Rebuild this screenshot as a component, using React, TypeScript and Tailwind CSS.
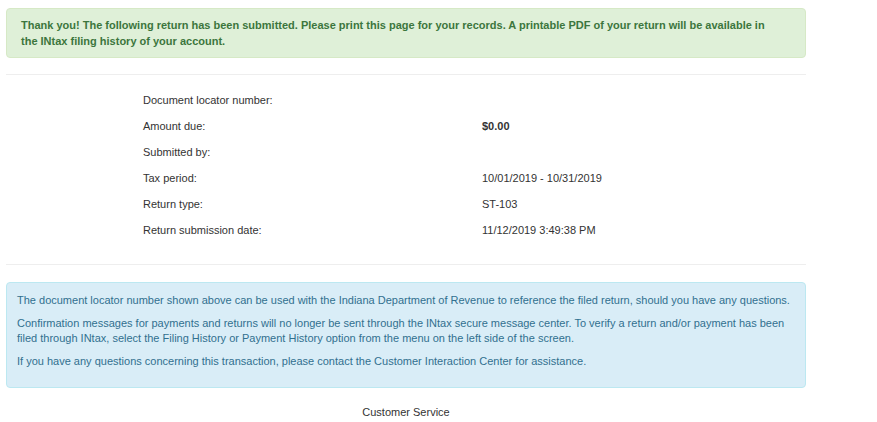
const rows: { label: string; value: string; bold?: boolean }[] = [
  { label: "Document locator number:", value: "" },
  { label: "Amount due:", value: "$0.00", bold: true },
  { label: "Submitted by:", value: "" },
  { label: "Tax period:", value: "10/01/2019 - 10/31/2019" },
  { label: "Return type:", value: "ST-103" },
  { label: "Return submission date:", value: "11/12/2019 3:49:38 PM" },
];

export default function App() {
  return (
    <main className="min-h-screen bg-white pl-[6px] pt-[8px] font-['Liberation_Sans',Arial,sans-serif] text-[11px] text-[#333]">
      <div className="w-[800px]">
        <div className="rounded-[4px] border border-[#d6e9c6] bg-[#dff0d8] pl-[14px] pr-[30px] py-[8px] font-bold leading-[16px] text-[#3c763d]">
          Thank you! The following return has been submitted. Please print this page for your records. A printable PDF of your return will be available in the INtax filing history of your account.
        </div>

        <div className="mt-[16px] h-px bg-[#eee]" />

        <div className="pb-[21px] pt-[12px]">
          {rows.map((row) => (
            <div key={row.label} className="flex h-[26px] items-center">
              <div className="w-[476px] pl-[137px]">{row.label}</div>
              <div className={row.bold ? "font-bold" : ""}>{row.value}</div>
            </div>
          ))}
        </div>

        <div className="h-px bg-[#eee]" />

        <div className="mt-[17px] rounded-[4px] border border-[#bce8f1] bg-[#d9edf7] px-[10px] pt-[10px] pb-[10px] leading-[15px] text-[#31708f]">
          <p className="mb-[8px]">
            The document locator number shown above can be used with the Indiana Department of Revenue to reference the filed return, should you have any questions.
          </p>
          <p className="mb-[8px]">
            Confirmation messages for payments and returns will no longer be sent through the INtax secure message center. To verify a return and/or payment has been filed through INtax, select the Filing History or Payment History option from the menu on the left side of the screen.
          </p>
          <p className="mb-[8px]">
            If you have any questions concerning this transaction, please contact the Customer Interaction Center for assistance.
          </p>
        </div>

        <div className="mt-[17px] text-center leading-[15px]">Customer Service</div>
      </div>
    </main>
  );
}
